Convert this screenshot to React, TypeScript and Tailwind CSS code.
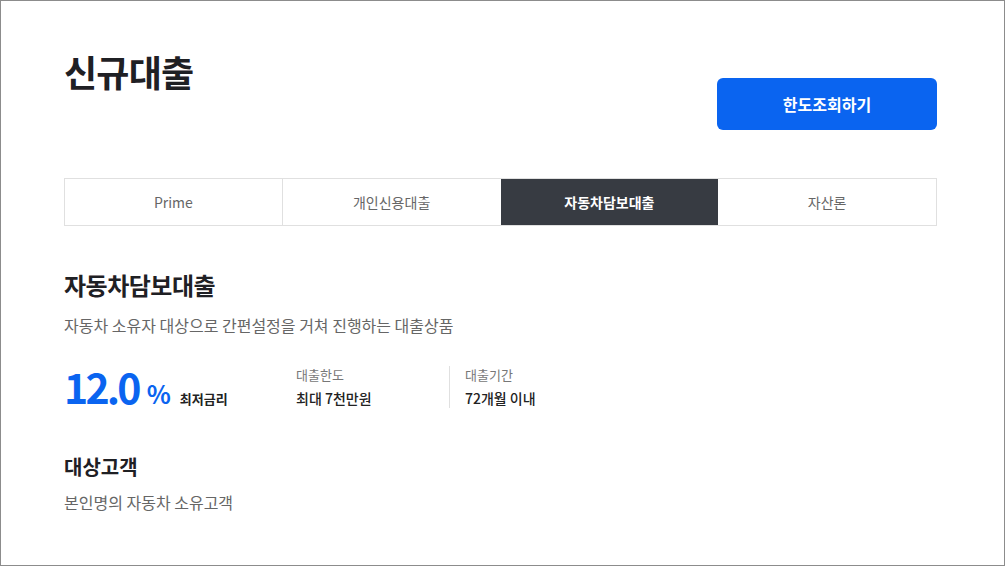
const FONT = { fontFamily: '"Noto Sans CJK KR", "Noto Sans", sans-serif' };

const tabs = ["Prime", "개인신용대출", "자동차담보대출", "자산론"];
const ACTIVE = 2;

export default function App() {
  return (
    <div
      className="h-[566px] w-[1005px] overflow-hidden border border-[#8c8c8c] bg-white text-[#222]"
      style={FONT}
    >
      <div className="pl-[63px] pr-[67px]">
        {/* 헤더 */}
        <div className="flex items-start justify-between">
          <h1 className="mt-[45px] text-[36px] font-bold leading-[50px] tracking-[-0.8px] text-[#1f2024]">
            신규대출
          </h1>
          <button className="mt-[77px] h-[52px] w-[220px] rounded-[6px] bg-[#0a64f0] text-[16px] font-bold text-white">
            한도조회하기
          </button>
        </div>

        {/* 탭 */}
        <div className="mt-[48px] grid h-[48px] grid-cols-4 border border-[#e0e0e0]">
          {tabs.map((t, i) => (
            <div
              key={t}
              className={
                i === ACTIVE
                  ? "flex items-center justify-center bg-[#373b42] text-[14px] font-bold text-white"
                  : i === ACTIVE - 1 || i === tabs.length - 1
                    ? "flex items-center justify-center text-[14px] text-[#666]"
                    : "flex items-center justify-center border-r border-[#e0e0e0] text-[14px] text-[#666]"
              }
            >
              {t}
            </div>
          ))}
        </div>

        {/* 상품 */}
        <h2 className="mt-[42px] text-[24px] font-bold leading-[34px] tracking-[-0.5px] text-[#1f2024]">
          자동차담보대출
        </h2>
        <p className="mt-[11px] text-[16px] leading-[24px] text-[#666]">
          자동차 소유자 대상으로 간편설정을 거쳐 진행하는 대출상품
        </p>

        <div className="mt-[24px] flex items-center">
          <div className="flex w-[232px] items-baseline">
            <span className="text-[41px] font-bold leading-[50px] tracking-[-2.8px] text-[#0a64f0]">12.0</span>
            <span className="ml-[8px] text-[25px] font-bold text-[#0a64f0]">%</span>
            <span className="ml-[9px] text-[13px] font-bold text-[#222]">최저금리</span>
          </div>
          <div className="flex w-[153px] flex-col">
            <span className="text-[13px] leading-[20px] text-[#777]">대출한도</span>
            <span className="mt-[3px] text-[14px] font-medium leading-[20px] text-[#222]">최대 7천만원</span>
          </div>
          <div className="flex h-[42px] flex-col border-l border-[#e0e0e0] pl-[15px]">
            <span className="mt-[-1px] text-[13px] leading-[20px] text-[#777]">대출기간</span>
            <span className="mt-[3px] text-[14px] font-medium leading-[20px] text-[#222]">72개월 이내</span>
          </div>
        </div>

        <h3 className="mt-[40px] text-[20px] font-bold leading-[28px] text-[#1f2024]">대상고객</h3>
        <p className="mt-[9px] text-[16px] leading-[24px] text-[#666]">본인명의 자동차 소유고객</p>
      </div>
    </div>
  );
}
